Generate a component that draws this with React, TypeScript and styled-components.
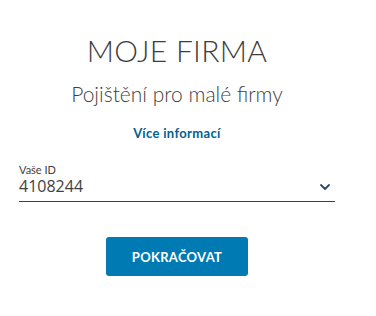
import React from 'react';
import styled, { createGlobalStyle } from 'styled-components';

const GlobalStyle = createGlobalStyle`
  html, body {
    margin: 0;
    padding: 0;
    background: #ffffff;
  }
  body {
    font-family: Lato, "Noto Sans", sans-serif;
    color: #414141;
  }
`;

const Page = styled.div`
  width: 354px;
  padding-top: 32px;
  box-sizing: border-box;
`;

const Header = styled.header`
  display: flex;
  flex-direction: column;
  align-items: center;
`;

const Title = styled.h1`
  margin: 0;
  font-size: 30px;
  line-height: 36px;
  font-weight: 300;
  letter-spacing: 0.3px;
  color: #3d3d3d;
`;

const Subtitle = styled.h2`
  margin: 13px 0 0;
  font-size: 21px;
  line-height: 25px;
  font-weight: 300;
  color: #3f3f3f;
`;

const InfoLink = styled.a`
  margin-top: 19px;
  font-size: 13px;
  line-height: 16px;
  font-weight: 700;
  letter-spacing: 0.35px;
  color: #006192;
  text-decoration: none;
  cursor: pointer;
`;

const Form = styled.form`
  display: flex;
  flex-direction: column;
  padding: 0 19px;
  margin-top: 22px;
`;

const Label = styled.label`
  font-size: 11px;
  line-height: 13px;
  color: #414141;
`;

const SelectRow = styled.div`
  display: flex;
  align-items: center;
  justify-content: space-between;
  margin-top: 1px;
  padding-bottom: 5px;
  border-bottom: 1.5px solid #414141;
`;

const Value = styled.span`
  font-family: "Open Sans", sans-serif;
  font-size: 16px;
  line-height: 19px;
  color: #414141;
`;

const Chevron = styled.svg`
  width: 12px;
  height: 8px;
  margin-right: 4px;
`;

const ButtonRow = styled.div`
  display: flex;
  justify-content: center;
  margin-top: 35px;
`;

const Button = styled.button`
  width: 142px;
  height: 39px;
  border: none;
  border-radius: 3px;
  background: #007ab3;
  color: #ffffff;
  font-family: Lato, sans-serif;
  font-size: 13px;
  font-weight: 700;
  letter-spacing: 0.3px;
  cursor: pointer;
`;

export default function App() {
  return (
    <>
      <GlobalStyle />
      <Page>
        <Header>
          <Title>MOJE FIRMA</Title>
          <Subtitle>Pojištění pro malé firmy</Subtitle>
          <InfoLink>Více informací</InfoLink>
        </Header>
        <Form onSubmit={(e) => e.preventDefault()}>
          <Label>Vaše ID</Label>
          <SelectRow>
            <Value>4108244</Value>
            <Chevron viewBox="0 0 12 8">
              <path d="M2 2l4 4 4-4" fill="none" stroke="#2f4a5f" strokeWidth="1.8" strokeLinecap="round" strokeLinejoin="round" />
            </Chevron>
          </SelectRow>
          <ButtonRow>
            <Button type="button">POKRAČOVAT</Button>
          </ButtonRow>
        </Form>
      </Page>
    </>
  );
}
